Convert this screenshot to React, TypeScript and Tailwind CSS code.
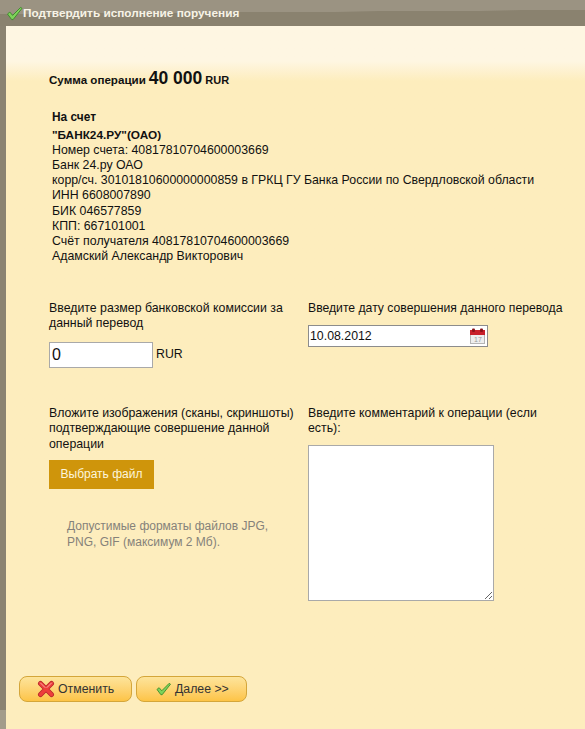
function CheckMark({ className }: { className: string }) {
  return (
    <svg viewBox="0 0 18 16" className={className}>
      <path
        d="M1.5 8.5 L4 6.5 L7 10 L15.5 1.5 L17 2.5 L7.5 14.5 L6 14.5 Z"
        fill="#7ed35a"
        stroke="#3d8a2c"
        strokeWidth="1"
        strokeLinejoin="round"
      />
    </svg>
  );
}

function CrossMark() {
  return (
    <svg viewBox="0 0 18 18" className="h-[18px] w-[18px]">
      <path d="M3.5 3.5 L14.5 14.5 M14.5 3.5 L3.5 14.5" stroke="#b8282a" strokeWidth="5" strokeLinecap="round" />
      <path d="M3.5 3.5 L14.5 14.5 M14.5 3.5 L3.5 14.5" stroke="#ee3f3c" strokeWidth="3.4" strokeLinecap="round" />
      <path d="M3.5 3 L8 7.5 M14.5 3 L10 7.5" stroke="#f9a9a0" strokeWidth="1" strokeLinecap="round" />
    </svg>
  );
}

function CalendarIcon() {
  return (
    <svg viewBox="0 0 15 16" className="w-[15px] h-4">
      <rect x="0.5" y="2.5" width="14" height="13" fill="#eeeeee" stroke="#b5b5b5" />
      <rect x="0" y="2" width="15" height="5" fill="#c8202a" />
      <rect x="2" y="0.5" width="3" height="3.5" rx="1" fill="#8c1218" />
      <rect x="10" y="0.5" width="3" height="3.5" rx="1" fill="#8c1218" />
      <text x="4" y="14" fontSize="7" fill="#9a9a9a" fontFamily="Liberation Sans">
        17
      </text>
    </svg>
  );
}

const account = [
  "Номер счета: 40817810704600003669",
  "Банк 24.ру ОАО",
  "корр/сч. 30101810600000000859 в ГРКЦ ГУ Банка России по Свердловской области",
  "ИНН 6608007890",
  "БИК 046577859",
  "КПП: 667101001",
  "Счёт получателя 40817810704600003669",
  "Адамский Александр Викторович",
];

const buttonClass =
  "flex items-center gap-[3px] h-[26px] rounded-[8px] border border-[#d4a63a] bg-gradient-to-b from-[#fde49a] to-[#fdc445] text-[12.3px] text-[#333333]";

export default function App() {
  return (
    <div className="relative h-[729px] w-[585px] overflow-hidden bg-[#8b8371] font-['Liberation_Sans',Arial,sans-serif] text-[12.33px] text-[#111111]">
      {/* title bar */}
      <div className="flex h-[26px] items-center bg-[linear-gradient(179.6deg,#9b9382_46%,#8a826f_47%)] pl-[6px] pt-[2px]">
        <CheckMark className="-mt-[2px] h-[15px] w-[17px]" />
        <span className="text-[11.8px] font-bold text-[#f7f3e6]">Подтвердить исполнение поручения</span>
      </div>

      <div className="ml-[6px] h-[703px] bg-gradient-to-b from-[#fef6e2] from-[35px] to-[#fdedbd] to-[55px]">
        {/* amount */}
        <div className="flex items-baseline pl-[43px] pt-[40px] text-[11.6px] font-bold leading-[24px]">
          <span>Сумма операции</span>
          <span className="ml-[3px] text-[17.5px]">40 000</span>
          <span className="ml-[3px] text-[11px]">RUR</span>
        </div>

        {/* recipient */}
        <div className="pl-[46px] pt-[18px] leading-[15.1px]">
          <div className="mb-[3px] text-[11.9px] font-bold">На счет</div>
          <div className="text-[11.8px] font-bold">"БАНК24.РУ"(ОАО)</div>
          {account.map((line) => (
            <div key={line}>{line}</div>
          ))}
        </div>

        {/* form */}
        <div className="grid grid-cols-[259px_1fr] pl-[43px] pt-[37px] leading-[15.5px]">
          <div>
            <div className="w-[255px]">Введите размер банковской комиссии за данный перевод</div>
            <div className="mt-[10px] flex items-center">
              <div className="flex h-[26px] w-[104px] items-center border border-[#a9a9a9] bg-white pl-[2px] text-[16px]">
                0
              </div>
              <span className="ml-[3px]">RUR</span>
            </div>
          </div>
          <div>
            <div className="text-[12.2px]">Введите дату совершения данного перевода</div>
            <div className="mt-[9px] flex h-[22px] w-[180px] items-center justify-between border border-[#8c8c8c] bg-white pl-[1px] pr-[2px]">
              10.08.2012
              <CalendarIcon />
            </div>
          </div>

          <div className="mt-[38px]">
            <div className="w-[255px]">
              Вложите изображения (сканы, скриншоты) подтверждающие совершение данной операции
            </div>
            <button className="mt-[8px] h-[29px] w-[105px] bg-[#cf950b] text-[12px] text-[#fdf5dc]">Выбрать файл</button>
            <div className="ml-[18px] mt-[30px] w-[220px] text-[12px] text-[#85827a]">
              Допустимые форматы файлов JPG, PNG, GIF (максимум 2 Мб).
            </div>
          </div>
          <div className="mt-[38px]">
            <div className="w-[255px]">Введите комментарий к операции (если есть):</div>
            <textarea className="mt-[8px] block h-[156px] w-[186px] border border-[#a9a9a9] bg-white" />
          </div>
        </div>

        {/* actions */}
        <div className="absolute left-[19px] top-[676px] flex gap-[4px]">
          <button className={`${buttonClass} w-[113px] pl-[17px]`}>
            <CrossMark />
            Отменить
          </button>
          <button className={`${buttonClass} w-[111px] pl-[18px]`}>
            <CheckMark className="h-[14px] w-[17px]" />
            Далее &gt;&gt;
          </button>
        </div>
      </div>
      {/* strip lightens below the button row */}
      <div className="absolute bottom-0 left-0 h-[19px] w-[6px] bg-[#a39c8a]" />
    </div>
  );
}
